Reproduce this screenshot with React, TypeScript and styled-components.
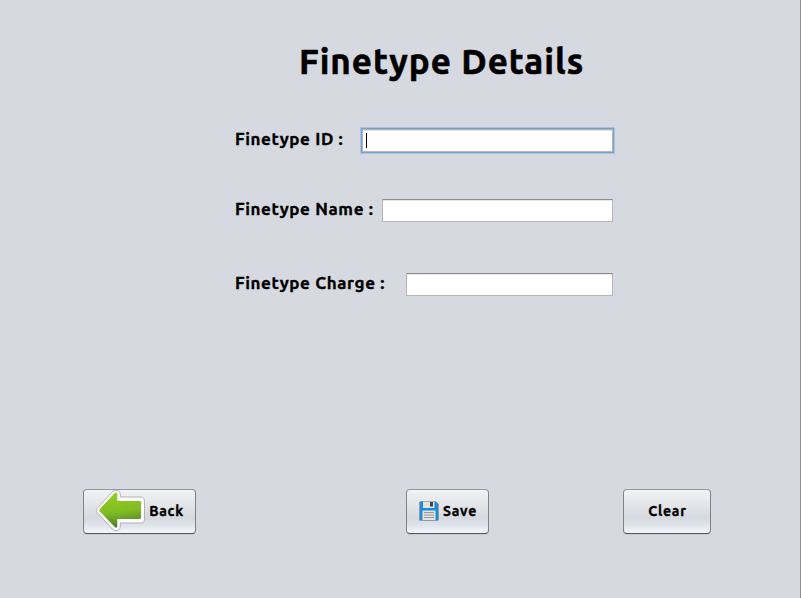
import React from "react";
import styled, { createGlobalStyle, css } from "styled-components";

const GlobalStyle = createGlobalStyle`
  * { box-sizing: border-box; }
  body { margin: 0; background: #d6d9df; overflow: hidden; }
`;

const Window = styled.main`
  display: flex;
  flex-direction: column;
  width: 801px;
  height: 598px;
  background: #d6d9df;
  border-right: 1px solid #8b8d90;
  color: #000;
  font-family: Ubuntu, "Noto Sans", sans-serif;
  font-weight: 700;
  -webkit-text-stroke: 0.35px #000;
`;

const Title = styled.h1`
  margin: 37px 0 0 299px;
  height: 48px;
  line-height: 48px;
  font-size: 35px;
  letter-spacing: 0.98px;
  white-space: nowrap;
  -webkit-text-stroke: 0.6px #000;
`;

const Form = styled.form`
  display: flex;
  flex-direction: column;
  width: 378px;
  margin: 44px 0 0 235px;
`;

const Field = styled.div<{ $gap: number }>`
  display: flex;
  justify-content: space-between;
  height: 23px;
  margin-bottom: ${(p) => p.$gap}px;
`;

const Label = styled.label`
  height: 20px;
  line-height: 20px;
  font-size: 17px;
  letter-spacing: 0.63px;
  white-space: nowrap;
`;

const TextBox = styled.div<{ $width: number; $focused?: boolean }>`
  display: flex;
  flex: none;
  align-items: center;
  width: ${(p) => p.$width}px;
  height: 23px;
  padding-left: 3px;
  background: #fff;
  border: 1px solid #b6b6b8;
  border-top-color: #8d8e91;
  box-shadow: inset 0 1px 0 #e8e8ea;
  ${(p) =>
    p.$focused &&
    css`
      border-top-color: #b0b0b2;
      box-shadow: inset 0 1px 0 #e4e4e6, 0 0 0 1px #73a4d1, 0 0 0 2px #a9c4de;
    `}
`;

const Caret = styled.span`
  width: 1px;
  height: 15px;
  background: #000;
`;

const Actions = styled.footer`
  display: flex;
  margin: 193px 0 0 83px;
`;

const Button = styled.button<{ $width: number; $before?: number }>`
  display: flex;
  align-items: center;
  justify-content: center;
  width: ${(p) => p.$width}px;
  height: 45px;
  margin: 0 0 0 ${(p) => p.$before ?? 0}px;
  padding: 0 0 2px 1px;
  gap: 4px;
  color: #000;
  font: 700 14px/20px Ubuntu, "Noto Sans", sans-serif;
  letter-spacing: 0.75px;
  border: 1px solid #808286;
  border-top-color: #96989c;
  border-bottom-color: #55575b;
  border-radius: 4px;
  background: linear-gradient(#f2f3f5 0%, #e3e5e9 35%, #d6d9df 65%, #e0e4eb 82%, #f3f7fd 100%);
  box-shadow: 0 1px 0 #c8cbd1;

  svg {
    flex: none;
  }
`;

const ArrowIcon = () => (
  <svg width="49" height="43" viewBox="0 0 49 43" aria-hidden="true">
    <defs>
      <linearGradient id="leaf" x1="0" y1="0" x2="0.15" y2="1">
        <stop offset="0" stopColor="#98cf20" />
        <stop offset="0.6" stopColor="#80bd23" />
        <stop offset="1" stopColor="#51812d" />
      </linearGradient>
    </defs>
    <path
      d="M1.2 19.3 16.7 2.5Q19 .4 22 1.5 24.3 2.6 24.3 5.5V8H44.5Q48.5 8 48.5 12.3V29.8Q48.5 34 44.5 34H24.3V37.2Q24.3 40.4 22 41.4 19 42.6 16.7 40.3L1.2 23.5Q-.3 21.4 1.2 19.3Z"
      fill="#fff"
      stroke="#b1b2b5"
      strokeWidth="1"
    />
    <path
      d="M3.8 20 18.7 4.1Q20.2 2.8 21.3 4.3V11.9H43.7Q45 11.9 45 13.2V28.2Q45 30 43.7 30H21.3V37.8Q20.2 39.4 18.7 38L3.8 22.6Q2.9 21.3 3.8 20Z"
      fill="url(#leaf)"
    />
  </svg>
);

const SaveIcon = () => (
  <svg width="20" height="20" viewBox="0 0 20 20" aria-hidden="true">
    <path d="M1 .8H17L19.2 3V19.2H.8V1Z" fill="#168de2" stroke="#647d91" strokeWidth=".8" />
    <path d="M4 .8H15.5V7H4Z" fill="#e5e3df" />
    <path d="M11 1H14V5.5H11Z" fill="#444649" />
    <path d="M3.5 9.5H16.5V19H3.5Z" fill="#e6e4df" />
    <path d="M5 11.5H15M5 14H15M5 16.5H15" stroke="#929697" />
  </svg>
);

export default function App() {
  return (
    <>
      <GlobalStyle />
      <Window>
        <Title>Finetype Details</Title>
        <Form>
          <Field $gap={47}>
            <Label>Finetype ID :</Label>
            <TextBox $width={251} $focused><Caret /></TextBox>
          </Field>
          <Field $gap={51}>
            <Label>Finetype Name :</Label>
            <TextBox $width={231} />
          </Field>
          <Field $gap={0}>
            <Label>Finetype Charge :</Label>
            <TextBox $width={207} />
          </Field>
        </Form>
        <Actions>
          <Button type="button" $width={113}><ArrowIcon />Back</Button>
          <Button type="button" $width={83} $before={210}><SaveIcon />Save</Button>
          <Button type="button" $width={88} $before={134}>Clear</Button>
        </Actions>
      </Window>
    </>
  );
}
